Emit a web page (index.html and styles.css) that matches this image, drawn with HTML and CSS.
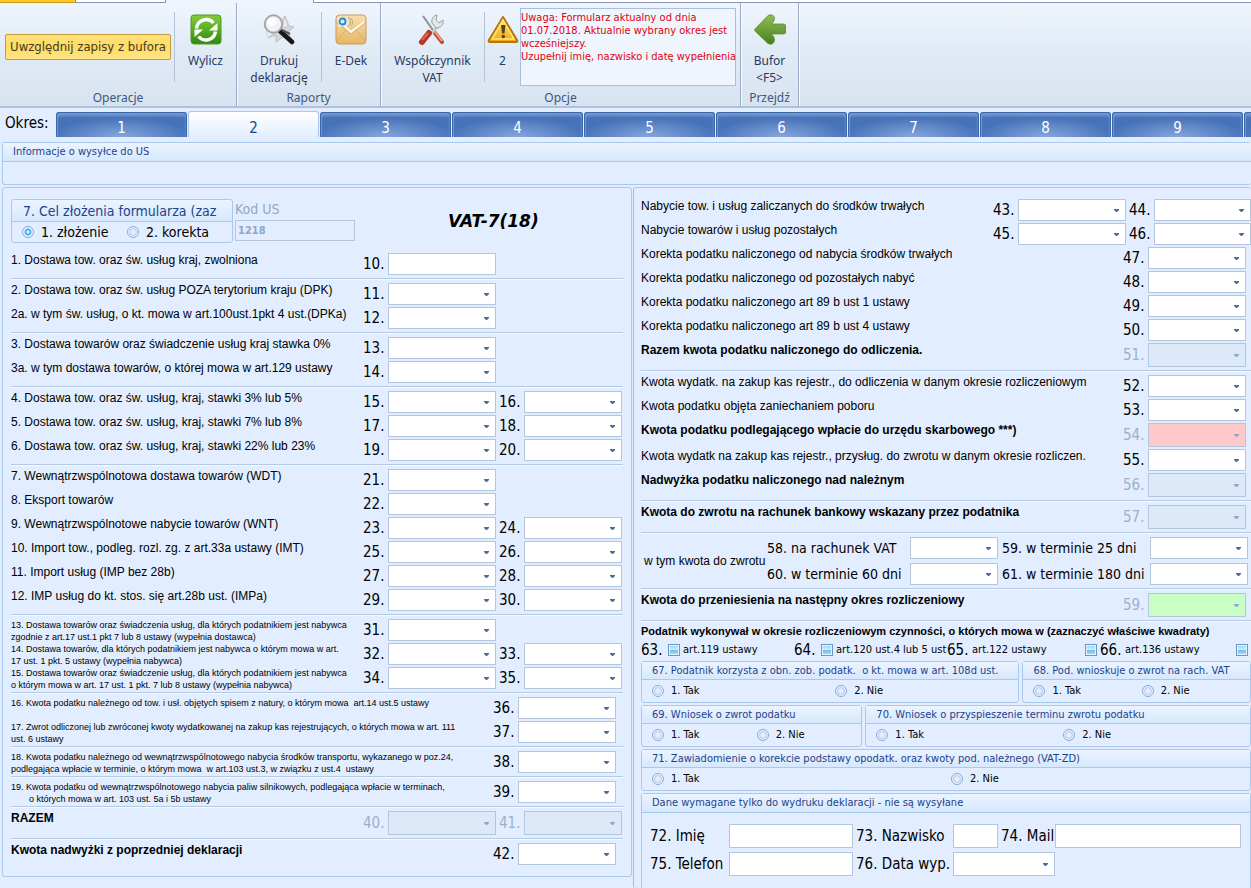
FILE: index.html
```html
<!DOCTYPE html>
<html lang="pl">
<head>
<meta charset="utf-8">
<title>VAT-7(18)</title>
<link rel="stylesheet" href="styles.css">
</head>
<body>
<div class="toptabs"><span class="tt tt-file"></span><span class="tt tt-main"></span><span class="tt tt-current"></span><span class="tt tt-rest"></span></div>
<header class="ribbon">
  <section class="rgroup g-oper">
    <div class="ritems">
      <button class="toggle" type="button">Uwzględnij zapisy z bufora</button>
      <i class="rsep"></i>
      <button class="rbtn" type="button">
        <svg class="ico" viewBox="0 0 32 32"><defs><linearGradient id="gr" x1="0" y1="0" x2="0" y2="1"><stop offset="0" stop-color="#86cc3c"/><stop offset="1" stop-color="#2f8a12"/></linearGradient></defs><rect x="1" y="1" width="30" height="29" rx="3" fill="url(#gr)" stroke="#4f9a22"/><path d="M6.500 14.500a9.700 9.700 0 0 1 17-5.500" fill="none" stroke="#fff" stroke-width="3.400"/><path d="M27.500 9v7.500h-8.500z" fill="#fff"/><path d="M25.500 17.500a9.700 9.700 0 0 1-17 5" fill="none" stroke="#fff" stroke-width="3.400"/><path d="M4.500 23v-7.500h8.500z" fill="#fff"/></svg>
        <span>Wylicz</span>
      </button>
    </div>
    <h2 class="rtitle">Operacje</h2>
  </section>
  <section class="rgroup g-rap">
    <div class="ritems">
      <button class="rbtn" type="button">
        <svg class="ico" viewBox="0 0 32 32"><path d="M13 13l9-11 4 10 5 1-6 5 4 8-9-3-7 5 0-7-8 3z" fill="#d4d5d8" stroke="#b4b5ba" stroke-width=".8"/><path d="M3 17l7 2-5 5zM22 3l3 9-6 2z" fill="#ececee" stroke="#c4c5c9" stroke-width=".6"/><path d="M17 17l12 11" stroke="#161616" stroke-width="4.500" stroke-linecap="round"/><path d="M19 16l8 4" stroke="#555" stroke-width="2"/><circle cx="10.500" cy="10" r="8.700" fill="#f2f2f4" stroke="#a5a6aa" stroke-width="2"/><ellipse cx="9" cy="8" rx="4.500" ry="4" fill="#fff"/></svg>
        <span>Drukuj<br>deklarację</span>
      </button>
      <i class="rsep"></i>
      <button class="rbtn" type="button">
        <svg class="ico" viewBox="0 0 32 32"><defs><linearGradient id="en" x1="0" y1="0" x2="0" y2="1"><stop offset="0" stop-color="#f8e0b0"/><stop offset="1" stop-color="#e6b564"/></linearGradient></defs><rect x="1" y="1" width="30" height="29" rx="3.500" fill="url(#en)" stroke="#c99a58"/><path d="M2 9L16 20 30 9M2 27l9-11M30 27l-9-11" fill="none" stroke="#d9ae68" stroke-width="1"/><path d="M4 7L16 18 29 8" fill="none" stroke="#fffaf0" stroke-width="1.800"/><path d="M2 4l11-1 1 8-10 2z" fill="#dcecf4"/><circle cx="7.500" cy="7.500" r="3" fill="none" stroke="#2a8ac0" stroke-width="1.800"/><path d="M13 3c3 2 3 7 0 9M16 4c2 2 2 6 0 8" fill="none" stroke="#c0a878"/></svg>
        <span>E-Dek</span>
      </button>
    </div>
    <h2 class="rtitle">Raporty</h2>
  </section>
  <section class="rgroup g-opc">
    <div class="ritems">
      <button class="rbtn" type="button">
        <svg class="ico" viewBox="0 0 32 32"><path d="M6 2l12 17" stroke="#8b8f94" stroke-width="2"/><path d="M18 19l7 9" stroke="#c0452f" stroke-width="4" stroke-linecap="round"/><path d="M18 18l7 9" stroke="#f5a08a" stroke-width="2"/><path d="M21 12L12 22" stroke="#c6c9cd" stroke-width="3"/><path d="M15 9c-1-4 2-8 5-8l-1 5 3 3 4-3c1 4-2 8-7 8z" fill="#e4e6e8" stroke="#9ba0a5"/><path d="M5 28l7-9" stroke="#b13a24" stroke-width="6" stroke-linecap="round"/><path d="M5 26l6-7" stroke="#dc624a" stroke-width="2.500"/></svg>
        <span>Współczynnik<br>VAT</span>
      </button>
      <i class="rsep"></i>
      <button class="rbtn warn" type="button">
        <svg class="ico" viewBox="0 0 32 32"><defs><linearGradient id="wa" x1="0" y1="0" x2="0" y2="1"><stop offset="0" stop-color="#fff07a"/><stop offset="1" stop-color="#f2a50c"/></linearGradient></defs><path d="M16 3L30 26q1 2-1 2H3q-2 0-1-2z" fill="url(#wa)" stroke="#b87410" stroke-width="2" stroke-linejoin="round"/><path d="M16 6L5 25h22z" fill="none" stroke="#ffe57a" stroke-width="1.500"/><path d="M14 11h4.500l-1 8.500h-2.500z" fill="#5b431b"/><circle cx="16.300" cy="22.500" r="1.800" fill="#5b431b"/></svg>
        <span>2</span>
      </button>
      <div class="notice">Uwaga: Formularz aktualny od dnia<br>01.07.2018. Aktualnie wybrany okres jest<br>wcześniejszy.<br>Uzupełnij imię, nazwisko i datę wypełnienia</div>
    </div>
    <h2 class="rtitle">Opcje</h2>
  </section>
  <section class="rgroup g-prz">
    <div class="ritems">
      <button class="rbtn" type="button">
        <svg class="ico" viewBox="0 0 32 32"><defs><linearGradient id="ar" x1="0" y1="0" x2="0" y2="1"><stop offset="0" stop-color="#94bd56"/><stop offset="1" stop-color="#47801c"/></linearGradient></defs><path d="M1 15L14 1.500Q20-1 20.500 5 20 8 17.500 10H29q3 0 3 2.500v5q0 2.500-3 2.500H17.500q3 2.500 3 6-1 6-6.500 3.500L1 17q-1-1 0-2z" fill="url(#ar)" stroke="#5b9129" stroke-width=".8"/></svg>
        <span>Bufor<br>&lt;F5&gt;</span>
      </button>
    </div>
    <h2 class="rtitle">Przejdź</h2>
  </section>
</header>

<nav class="months">
  <span class="okres">Okres:</span>
  <button type="button">1</button><button type="button" class="on">2</button><button type="button">3</button><button type="button">4</button><button type="button">5</button><button type="button">6</button><button type="button">7</button><button type="button">8</button><button type="button">9</button><button type="button" aria-label="Następny okres"></button>
</nav>

<section class="group info">
  <h3 class="gtitle">Informacje o wysyłce do US</h3>
  <div class="info-body"></div>
</section>

<main class="work">
<form class="panel left">
  <div class="head">
    <div class="group purpose" role="radiogroup" aria-labelledby="t7">
      <h3 class="gtitle" id="t7">7. Cel złożenia formularza (zaz</h3>
      <div class="radios"><label><input type="radio" name="cel" checked>1. złożenie</label><label><input type="radio" name="cel">2. korekta</label></div>
    </div>
    <div class="kod"><label for="kod">Kod US</label><input id="kod" type="text" value="1218" disabled></div>
    <h1>VAT-7(18)</h1>
  </div>

  <div class="sec">
    <div class="row"><span>1. Dostawa tow. oraz św. usług kraj, zwolniona</span><label for="p10">10.</label><input id="p10" type="text"></div>
  </div>
  <div class="sec">
    <div class="row"><span>2. Dostawa tow. oraz św. usług POZA terytorium kraju (DPK)</span><label for="p11">11.</label><select id="p11"></select></div>
    <div class="row"><span>2a. w tym św. usług, o kt. mowa w art.100ust.1pkt 4 ust.(DPKa)</span><label for="p12">12.</label><select id="p12"></select></div>
  </div>
  <div class="sec">
    <div class="row"><span>3. Dostawa towarów oraz świadczenie usług kraj stawka 0%</span><label for="p13">13.</label><select id="p13"></select></div>
    <div class="row"><span>3a. w tym dostawa towarów, o której mowa w art.129 ustawy</span><label for="p14">14.</label><select id="p14"></select></div>
  </div>
  <div class="sec">
    <div class="row"><span>4. Dostawa tow. oraz św. usług, kraj, stawki 3% lub 5%</span><label for="p15">15.</label><select id="p15"></select><label for="p16">16.</label><select id="p16"></select></div>
    <div class="row"><span>5. Dostawa tow. oraz św. usług, kraj, stawki 7% lub 8%</span><label for="p17">17.</label><select id="p17"></select><label for="p18">18.</label><select id="p18"></select></div>
    <div class="row"><span>6. Dostawa tow. oraz św. usług, kraj, stawki 22% lub 23%</span><label for="p19">19.</label><select id="p19"></select><label for="p20">20.</label><select id="p20"></select></div>
  </div>
  <div class="sec">
    <div class="row"><span>7. Wewnątrzwspólnotowa dostawa towarów (WDT)</span><label for="p21">21.</label><select id="p21"></select></div>
    <div class="row"><span>8. Eksport towarów</span><label for="p22">22.</label><select id="p22"></select></div>
    <div class="row"><span>9. Wewnątrzwspólnotowe nabycie towarów (WNT)</span><label for="p23">23.</label><select id="p23"></select><label for="p24">24.</label><select id="p24"></select></div>
    <div class="row"><span>10. Import tow., podleg. rozl. zg. z art.33a ustawy (IMT)</span><label for="p25">25.</label><select id="p25"></select><label for="p26">26.</label><select id="p26"></select></div>
    <div class="row"><span>11. Import usług (IMP bez 28b)</span><label for="p27">27.</label><select id="p27"></select><label for="p28">28.</label><select id="p28"></select></div>
    <div class="row"><span>12. IMP usług do kt. stos. się art.28b ust. (IMPa)</span><label for="p29">29.</label><select id="p29"></select><label for="p30">30.</label><select id="p30"></select></div>
  </div>
  <div class="sec small">
    <div class="row"><span>13. Dostawa towarów oraz świadczenia usług, dla których podatnikiem jest nabywca<br>zgodnie z art.17 ust.1 pkt 7 lub 8 ustawy (wypełnia dostawca)</span><label for="p31">31.</label><select id="p31"></select></div>
    <div class="row"><span>14. Dostawa towarów, dla których podatnikiem jest nabywca o którym mowa w art.<br>17 ust. 1 pkt. 5 ustawy (wypełnia nabywca)</span><label for="p32">32.</label><select id="p32"></select><label for="p33">33.</label><select id="p33"></select></div>
    <div class="row"><span>15. Dostawa towarów oraz świadczenie usług, dla których podatnikiem jest nabywca<br>o którym mowa w art. 17 ust. 1 pkt. 7 lub 8 ustawy (wypełnia nabywca)</span><label for="p34">34.</label><select id="p34"></select><label for="p35">35.</label><select id="p35"></select></div>
  </div>
  <div class="sec small">
    <div class="row one"><span>16. Kwota podatku należnego od tow. i usł. objętych spisem z natury, o którym mowa&nbsp; art.14 ust.5 ustawy</span><label for="p36">36.</label><select id="p36"></select></div>
    <div class="row one"><span>17. Zwrot odliczonej lub zwróconej kwoty wydatkowanej na zakup kas rejestrujących, o których mowa w art. 111<br>ust. 6 ustawy</span><label for="p37">37.</label><select id="p37"></select></div>
  </div>
  <div class="sec small">
    <div class="row one"><span>18. Kwota podatku należnego od wewnątrzwspólnotowego nabycia środków transportu, wykazanego w poz.24,<br>podlegająca wpłacie w terminie, o którym mowa&nbsp; w art.103 ust.3, w związku z ust.4&nbsp; ustawy</span><label for="p38">38.</label><select id="p38"></select></div>
  </div>
  <div class="sec small">
    <div class="row one"><span>19. Kwota podatku od wewnątrzwspólnotowego nabycia paliw silnikowych, podlegająca wpłacie w terminach,<br><span class="indent">o których mowa w art. 103 ust. 5a i 5b ustawy</span></span><label for="p39">39.</label><select id="p39"></select></div>
  </div>
  <div class="sec">
    <div class="row tall off"><b>RAZEM</b><label for="p40">40.</label><select id="p40" disabled></select><label for="p41">41.</label><select id="p41" disabled></select></div>
  </div>
  <div class="sec">
    <div class="row one"><b>Kwota nadwyżki z poprzedniej deklaracji</b><label for="p42">42.</label><select id="p42"></select></div>
  </div>
</form>

<form class="panel right">
  <div class="sec">
    <div class="row"><span>Nabycie tow. i usług zaliczanych do środków trwałych</span><label for="p43">43.</label><select id="p43"></select><label for="p44">44.</label><select id="p44"></select></div>
    <div class="row"><span>Nabycie towarów i usług pozostałych</span><label for="p45">45.</label><select id="p45"></select><label for="p46">46.</label><select id="p46"></select></div>
    <div class="row one"><span>Korekta podatku naliczonego od nabycia środków trwałych</span><label for="p47">47.</label><select id="p47"></select></div>
    <div class="row one"><span>Korekta podatku naliczonego od pozostałych nabyć</span><label for="p48">48.</label><select id="p48"></select></div>
    <div class="row one"><span>Korekta podatku naliczonego art 89 b ust 1 ustawy</span><label for="p49">49.</label><select id="p49"></select></div>
    <div class="row one"><span>Korekta podatku naliczonego art 89 b ust 4 ustawy</span><label for="p50">50.</label><select id="p50"></select></div>
    <div class="row one tall off"><b>Razem kwota podatku naliczonego do odliczenia.</b><label for="p51">51.</label><select id="p51" disabled></select></div>
  </div>
  <div class="sec">
    <div class="row one"><span>Kwota wydatk. na zakup kas rejestr., do odliczenia w danym okresie rozliczeniowym</span><label for="p52">52.</label><select id="p52"></select></div>
    <div class="row one"><span>Kwota podatku objęta zaniechaniem poboru</span><label for="p53">53.</label><select id="p53"></select></div>
    <div class="row one tall off"><b>Kwota podatku podlegającego wpłacie do urzędu skarbowego ***)</b><label for="p54">54.</label><select id="p54" class="red" disabled></select></div>
    <div class="row one"><span>Kwota wydatk na zakup kas rejestr., przysług. do zwrotu w danym okresie rozliczen.</span><label for="p55">55.</label><select id="p55"></select></div>
    <div class="row one tall off"><b>Nadwyżka podatku naliczonego nad należnym</b><label for="p56">56.</label><select id="p56" disabled></select></div>
  </div>
  <div class="sec">
    <div class="row one tall off"><b>Kwota do zwrotu na rachunek bankowy wskazany przez podatnika</b><label for="p57">57.</label><select id="p57" disabled></select></div>
  </div>
  <div class="sec">
    <div class="refund">
      <span>w tym kwota do zwrotu</span>
      <label for="p58">58. na rachunek VAT</label><select id="p58"></select><label class="second" for="p59a">59. w terminie 25 dni</label><select id="p59a"></select>
      <label for="p60">60. w terminie 60 dni</label><select id="p60"></select><label class="second" for="p61">61. w terminie 180 dni</label><select id="p61"></select>
    </div>
  </div>
  <div class="sec">
    <div class="row one tall off"><b>Kwota do przeniesienia na następny okres rozliczeniowy</b><label for="p59">59.</label><select id="p59" class="green" disabled></select></div>
  </div>
  <div class="sec checks">
    <b>Podatnik wykonywał w okresie rozliczeniowym czynności, o których mowa w (zaznaczyć właściwe kwadraty)</b>
    <div class="checkrow">
      <label><span class="n">63.</span><input type="checkbox"><span>art.119 ustawy</span></label>
      <label><span class="n">64.</span><input type="checkbox"><span>art.120 ust.4 lub 5 ust</span></label>
      <label><span class="n">65.</span><span class="grow">art.122 ustawy</span><input type="checkbox"></label>
      <label><span class="n">66.</span><span class="grow">art.136 ustawy</span><input type="checkbox"></label>
    </div>
  </div>
  <div class="groups">
    <div class="pair pair-a">
      <div class="group" role="radiogroup" aria-labelledby="t67"><h3 class="gtitle" id="t67">67. Podatnik korzysta z obn. zob. podatk.&nbsp; o kt. mowa w art. 108d ust.</h3><div class="radios"><label><input type="radio" name="r67">1. Tak</label><label><input type="radio" name="r67">2. Nie</label></div></div>
      <div class="group" role="radiogroup" aria-labelledby="t68"><h3 class="gtitle" id="t68">68. Pod. wnioskuje o zwrot na rach. VAT</h3><div class="radios"><label><input type="radio" name="r68">1. Tak</label><label><input type="radio" name="r68">2. Nie</label></div></div>
    </div>
    <div class="pair pair-b">
      <div class="group" role="radiogroup" aria-labelledby="t69"><h3 class="gtitle" id="t69">69. Wniosek o zwrot podatku</h3><div class="radios"><label><input type="radio" name="r69">1. Tak</label><label><input type="radio" name="r69">2. Nie</label></div></div>
      <div class="group" role="radiogroup" aria-labelledby="t70"><h3 class="gtitle" id="t70">70. Wniosek o przyspieszenie terminu zwrotu podatku</h3><div class="radios"><label><input type="radio" name="r70">1. Tak</label><label><input type="radio" name="r70">2. Nie</label></div></div>
    </div>
    <div class="group" role="radiogroup" aria-labelledby="t71"><h3 class="gtitle" id="t71">71. Zawiadomienie o korekcie podstawy opodatk. oraz kwoty pod. należnego (VAT-ZD)</h3><div class="radios"><label><input type="radio" name="r71">1. Tak</label><label><input type="radio" name="r71">2. Nie</label></div></div>
    <div class="group person">
      <h3 class="gtitle">Dane wymagane tylko do wydruku deklaracji - nie są wysyłane</h3>
      <div class="fields">
        <label for="p72">72. Imię</label><input id="p72" type="text"><label class="next" for="p73">73. Nazwisko</label><input id="p73" type="text"><label class="next" for="p74">74. Mail</label><input id="p74" type="text">
        <label for="p75">75. Telefon</label><input id="p75" type="text"><label class="next" for="p76">76. Data wyp.</label><select id="p76" class="date"></select>
      </div>
    </div>
  </div>
</form>
</main>
</body>
</html>
```
FILE: styles.css
```css
* { box-sizing: border-box; }
:root {
  --ui: "DejaVu Sans Condensed", "DejaVu Sans", sans-serif;
  --doc: "Liberation Sans", Arial, sans-serif;
  --bg: #e2eeff;
  --line: #aac8ee;
  --box: #b3c6dd;
  --title: #1e418c;
}
html, body { margin: 0; min-height: 100vh; }
body {
  background: var(--bg);
  color: #000;
  font: 12px/14px var(--doc);
  overflow: hidden;
}
button, input, select { font: inherit; margin: 0; }
h1, h2, h3 { margin: 0; font-weight: normal; }

.toptabs { display: flex; height: 3px; background: #eff5fd; }
.tt { border-bottom: 1px solid #8b93b8; background: #fff; }
.tt-file { width: 75px; background: #ffc91f; border-color: #c79a28; }
.tt-main { width: 91px; border-right: 1px solid #8b93b8; border-left: 1px solid #8b93b8; }
.tt-current { width: 147px; background: #eff5fd; border-color: #eff5fd; }
.tt-rest { flex: 1; border-left: 1px solid #8b93b8; }

.ribbon {
  display: flex;
  height: 105px;
  background: linear-gradient(#eff5fd, #e1ebf6 45%, #d8e3f0);
  border-bottom: 2px solid #b0c0df;
  color: #263a5e;
  font: 12px/17px "Noto Sans", sans-serif;
}
.rgroup { display: flex; flex-direction: column; border-right: 1px solid #9aabc6; box-shadow: 1px 0 #f6faff; }
.ritems { display: flex; flex: 1; align-items: flex-start; }
.rtitle { text-align: center; font-size: 12px; line-height: 17px; color: #3d5880; }
.g-oper { width: 237px; }
.g-rap { width: 144px; }
.g-opc { width: 360px; }
.g-prz { width: 58px; }
.rsep { width: 1px; height: 70px; margin-top: 9px; background: #b4c3d8; }
.rbtn {
  flex: 1;
  display: flex;
  flex-direction: column;
  align-items: center;
  gap: 6px;
  padding: 11px 0 0;
  border: 0;
  background: none;
  color: inherit;
  white-space: nowrap;
}
.g-rap .rbtn:first-child { flex: 0 0 84px; }
.g-opc .rbtn:first-child { flex: 0 0 103px; }
.ico { width: 32px; height: 32px; }
.g-opc .warn { flex: 0 0 35px; }
.toggle {
  width: 166px;
  height: 26px;
  margin: 31px 3px 0 5px;
  padding: 0;
  border: 1px solid #c79a3a;
  border-radius: 2px;
  background: linear-gradient(#ffe27d, #ffdb62 50%, #ffe58a);
  color: #443a22;
  font: 13px/20px var(--ui);
  white-space: nowrap;
}
.notice {
  width: 216px;
  height: 78px;
  margin-top: 5px;
  padding: 2px 0 0;
  border: 1px solid #aabfdc;
  background: #eef5fd;
  color: #e00010;
  font: 11px/13px var(--ui);
  white-space: nowrap;
}

.months { display: flex; align-items: flex-end; gap: 1px; height: 29px; padding-left: 5px; overflow: hidden; }
.okres { flex: 0 0 50px; align-self: center; font: 15px/18px var(--ui); }
.months button {
  flex: 0 0 131px;
  height: 25px;
  padding: 6px 0 0;
  border: 1px solid #3c66a8;
  border-bottom: 0;
  border-radius: 3px 3px 0 0;
  background: radial-gradient(ellipse 60% 90% at 50% 100%, #86a6dc, #4672b8 90%), #4672b8;
  box-shadow: inset 0 3px 3px #7799cf, inset 1px 0 #6d92cc;
  color: #fff;
  font: 15px/18px var(--ui);
}
.months .on { height: 26px; border-color: var(--line); background: linear-gradient(#fff, #e2eeff); box-shadow: none; color: var(--title); }

.group { border: 1px solid var(--line); border-radius: 3px; min-width: 0; }
.gtitle {
  padding: 0 10px;
  border-bottom: 1px solid var(--line);
  background: linear-gradient(#ebf4ff, #d6e8fd);
  color: var(--title);
  font: 11px/17px var(--ui);
  white-space: nowrap;
  overflow: hidden;
}
.info { margin: 5px 0 2px 2px; border-right: 0; }
.info .gtitle { line-height: 18px; }
.info-body { height: 22px; }

.work { display: grid; grid-template-columns: 630fr 618fr; gap: 1px; padding-left: 2px; align-items: start; }
.panel { border: 1px solid var(--line); border-radius: 3px; }
.left { padding: 11px 8px 8px; }
.right { padding: 8px 0 0 7px; border-width: 1px 0 0 1px; border-left-color: #9fbfe8; }

.head { display: flex; height: 51px; }
.purpose { width: 222px; height: 44px; background: linear-gradient(#ebf4ff, #d6e8fd 21px, var(--line) 21px, var(--line) 22px, var(--bg) 22px); }
.purpose .gtitle { padding: 0; margin: 0 11px; line-height: 22px; background: none; border: 0; font-size: 14px; }
.purpose .radios { grid-template-columns: 105px 1fr; height: 20px; }
.purpose .radios label { font-size: 14px; }
.kod { width: 122px; padding-left: 2px; color: #93a8c6; font: 14px/21px var(--ui); }
.kod label { display: block; }
h1 { padding: 12px 0 0 93px; font: italic bold 17px/20px "DejaVu Sans", sans-serif; }

.sec { padding: 3px 0; display: flex; flex-direction: column; gap: 2px; }
.sec + .sec { border-top: 1px solid #b4c9e4; box-shadow: inset 0 1px #f5faff; padding-top: 4px; }
.row { display: grid; grid-template-columns: minmax(0, 1fr) 25px 108px 28px 98px; grid-template-rows: 100%; padding-right: 1px; height: 22px; }
.right .row { grid-template-columns: minmax(0, 1fr) 25px 108px 28px 97px; padding-right: 0; }
.row.one { grid-template-columns: minmax(0, 1fr) 25px 98px; padding-right: 7px; }
.right .row.one { grid-template-columns: minmax(0, 1fr) 25px 98px; padding-right: 5px; }
.row.tall { height: 24px; }
.row > span, .row > b { white-space: nowrap; }
.row label { font: 15px/22px var(--ui); white-space: nowrap; }
.row select + label { padding-left: 3px; }
.off label { color: #9cb0cd; line-height: 24px; }
.small .row > span { font-size: 9px; line-height: 12px; }
.indent { padding-left: 18px; }

input[type="text"], select { width: 100%; min-width: 0; height: 100%; border: 1px solid var(--box); border-radius: 0; background-color: #fff; color: #000; }
.kod input[type="text"] { display: block; width: 120px; height: 21px; padding: 0 2px; background: none; color: #8fa6c4; font: bold 11px/14px var(--ui); }
select {
  appearance: none;
  padding: 0 14px 0 3px;
  background-image: url("data:image/svg+xml,%3Csvg xmlns='http://www.w3.org/2000/svg' width='5' height='3'%3E%3Cpath d='M0 0h5v1L3 3H2L0 1z' fill='%234a6f9f'/%3E%3C/svg%3E");
  background-repeat: no-repeat;
  background-position: right 6px center;
}
select:disabled { opacity: 1; background-color: #dce9f9; background-image: url("data:image/svg+xml,%3Csvg xmlns='http://www.w3.org/2000/svg' width='5' height='3'%3E%3Cpath d='M0 0h5v1L3 3H2L0 1z' fill='%2393a8c6'/%3E%3C/svg%3E"); }
select.red:disabled { background-color: #ffc9c9; }
select.green:disabled { background-color: #c9ffc4; }

.refund { display: grid; grid-template-columns: 126px 143px 88px 152px 98px; grid-auto-rows: 22px; row-gap: 4px; font: 14px/22px var(--ui); white-space: nowrap; }
.refund > span { grid-row: span 2; padding-left: 3px; font: 12px/48px var(--doc); }
.refund .second { padding-left: 4px; }

.sec.checks { padding: 3px 0 1px; }
.checks b { white-space: nowrap; font-size: 11px; line-height: 14px; }
.checkrow { display: grid; grid-template-columns: 153px 153px 153px 151px; height: 20px; align-items: center; font: 11px/18px var(--ui); }
.checkrow label { display: flex; align-items: center; white-space: nowrap; min-width: 0; }
.checkrow .n { flex: 0 0 25px; font-size: 15px; }
.checkrow .grow { flex: 1; }
input[type="checkbox"] { appearance: none; flex: 0 0 12px; height: 12px; margin: 0 3px 0 2px; border: 1px solid #6c98c8; background: linear-gradient(#8fd0f4, #d4f0fd 50%, #6cbdec 50%, #a8e0fa); box-shadow: inset 0 0 0 1px #e4f2ff; }

.groups { display: flex; flex-direction: column; gap: 2px; }
.pair { display: grid; gap: 3px; }
.pair-a { grid-template-columns: 379fr 229fr; }
.pair-b { grid-template-columns: 221fr 385fr; }
.radios { display: grid; grid-template-columns: 1fr 1fr; align-items: center; height: 22px; padding-left: 10px; }
.radios label { display: flex; align-items: center; gap: 7px; font: 11px/20px var(--ui); white-space: nowrap; }
input[type="radio"] { appearance: none; width: 12px; height: 12px; border: 1px solid #86a9dc; border-radius: 50%; background: radial-gradient(circle, #e2eeff 35%, #a9c2e8 45%, #e8f2ff 60%); }
input[type="radio"]:checked { background: radial-gradient(circle, #c8f0ff 12%, #2fa4e8 40%, #e8f2ff 55%); }
.person { border-bottom: 0; border-radius: 3px 3px 0 0; min-height: 95px; }
.person .gtitle { line-height: 18px; }
.fields { display: grid; grid-template-columns: 79px 124px 100px 45px 57px minmax(0, 1fr); grid-auto-rows: 24px; row-gap: 4px; padding: 11px 9px 0 8px; font: 15px/24px var(--ui); }
.fields .next { padding-left: 3px; }
.fields .date { grid-column: span 2; }
```
